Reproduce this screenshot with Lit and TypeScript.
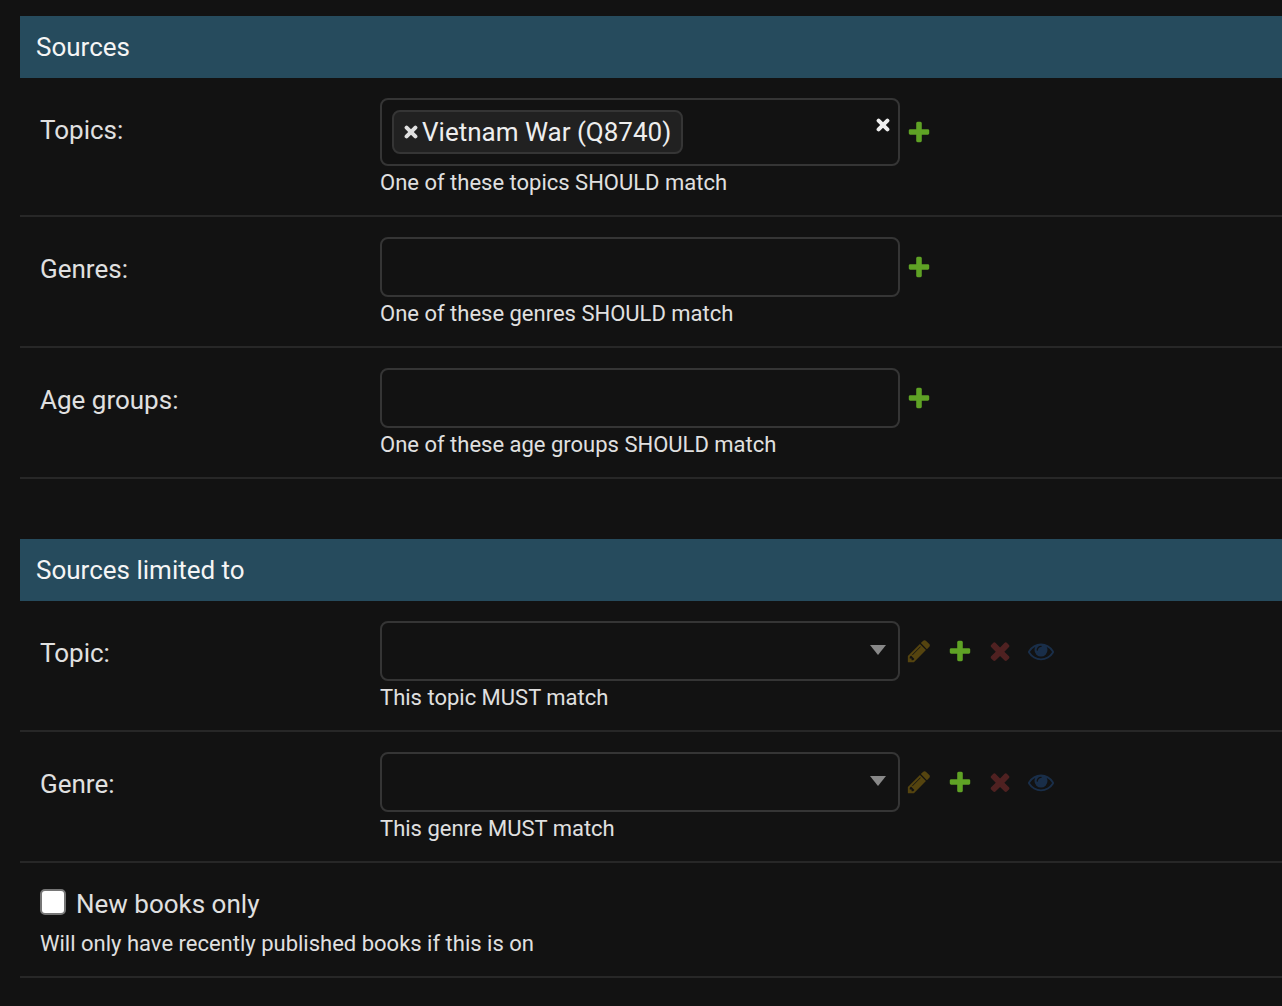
import { LitElement, html, css, svg, nothing } from "lit";
import { customElement, property, state } from "lit/decorators.js";

type IconName = "add" | "change" | "delete" | "view";

const ICONS: Record<IconName, string> = {
  add: "M1600 796v192q0 40-28 68t-68 28h-416v416q0 40-28 68t-68 28h-192q-40 0-68-28t-28-68v-416h-416q-40 0-68-28t-28-68v-192q0-40 28-68t68-28h416v-416q0-40 28-68t68-28h192q40 0 68 28t28 68v416h416q40 0 68 28t28 68z",
  change:
    "M491 1536l91-91-235-235-91 91v107h128v128h107zm523-928q0-22-22-22-10 0-17 7l-542 542q-7 7-7 17 0 22 22 22 10 0 17-7l542-542q7-7 7-17zm-54-192l416 416-832 832h-416v-416zm683 96q0 53-37 90l-166 166-416-416 166-165q36-38 90-38 53 0 91 38l235 234q37 39 37 91z",
  delete:
    "M1490 1322q0 40-28 68l-136 136q-28 28-68 28t-68-28l-294-294-294 294q-28 28-68 28t-68-28l-136-136q-28-28-28-68t28-68l294-294-294-294q-28-28-28-68t28-68l136-136q28-28 68-28t68 28l294 294 294-294q28-28 68-28t68 28l136 136q28 28 28 68t-28 68l-294 294 294 294q28 28 28 68z",
  view: "M1664 960q-152-236-381-353 61 104 61 225 0 185-131.5 316.5t-316.5 131.5-316.5-131.5-131.5-316.5q0-121 61-225-229 117-381 353 133 205 333.5 326.5t434.5 121.5 434.5-121.5 333.5-326.5zm-720-384q0-20-14-34t-34-14q-125 0-214.5 89.5t-89.5 214.5q0 20 14 34t34 14 34-14 14-34q0-86 61-147t147-61q20 0 34-14t14-34zm848 384q0 34-20 69-140 230-376.5 368.5t-499.5 138.5-499.5-139-376.5-368q-20-35-20-69t20-69q140-229 376.5-368t499.5-139 499.5 139 376.5 368q20 35 20 69z",
};

const VIEW_BOXES: Record<IconName, string> = {
  add: "0 0 1792 1792",
  change: "0 0 1792 1792",
  delete: "130 90 1652 1652",
  view: "69 0 1792 1792",
};

const cross = html`<svg class="cross" viewBox="0 0 14 14" aria-hidden="true">
  ${svg`<path d="M2.6 2.6L11.4 11.4M11.4 2.6L2.6 11.4" />`}
</svg>`;

const baseStyles = css`
  * {
    box-sizing: border-box;
  }
  button {
    display: flex;
    padding: 0;
    border: 0;
    background: none;
    color: inherit;
    font: inherit;
    cursor: pointer;
  }
`;

@customElement("related-action")
export class RelatedAction extends LitElement {
  @property() icon: IconName = "add";
  @property() name = "";
  @property({ type: Boolean }) inactive = false;

  static styles = [
    baseStyles,
    css`
      :host {
        display: block;
      }
      button:disabled {
        opacity: 0.3;
        cursor: default;
      }
      .icon {
        display: block;
        width: 26px;
        height: 26px;
        overflow: visible;
      }
      .add {
        fill: #5fa225;
      }
      .change {
        fill: #efb80b;
      }
      .delete {
        fill: #dd4646;
      }
      .view {
        fill: #2b70c8;
      }
    `,
  ];

  render() {
    return html`<button type="button" aria-label=${this.name} ?disabled=${this.inactive}>
      <svg class="icon ${this.icon}" viewBox=${VIEW_BOXES[this.icon]} aria-hidden="true">
        ${svg`<path d=${ICONS[this.icon]} />`}
      </svg>
    </button>`;
  }
}

@customElement("form-row")
export class FormRow extends LitElement {
  @property() label = "";
  @property() help = "";
  @property() kind: "multiple" | "single" = "multiple";
  @property({ attribute: false }) values: string[] = [];
  @state() private selected: string[] | null = null;

  static styles = [
    baseStyles,
    css`
      :host {
        display: grid;
        grid-template-columns: 340px minmax(0, 1fr);
        padding: 20px;
        border-bottom: 2px solid #272727;
      }
      .label {
        padding-top: 16px;
        font-size: 26px;
        line-height: 32px;
        color: #e0e0e0;
      }
      .line {
        display: flex;
        align-items: center;
        gap: 6px;
      }
      .actions {
        display: flex;
        gap: 15px;
      }
      .box {
        width: 520px;
        min-width: 0;
        min-height: 60px;
        border: 2px solid #353535;
        border-radius: 8px;
        background: #121212;
        color: #eeeeee;
        font: inherit;
        font-size: 26px;
      }
      .tags {
        display: flex;
        align-items: flex-start;
        padding: 10px;
      }
      .tag {
        display: flex;
        align-items: center;
        gap: 4px;
        height: 44px;
        padding: 0 10px;
        border: 2px solid #353535;
        border-radius: 8px;
        background: #212121;
        white-space: nowrap;
      }
      .search {
        flex: 1;
        min-width: 0;
        width: 0;
        height: 36px;
        padding: 0;
        border: 0;
        outline: 0;
        background: none;
        color: inherit;
        font: inherit;
      }
      .clear {
        padding: 8px 0;
        margin-right: -2px;
      }
      .cross {
        display: block;
        width: 14px;
        height: 14px;
        fill: none;
        stroke: #eeeeee;
        stroke-width: 4;
        stroke-linecap: round;
      }
      .tag .cross {
        stroke: #e0e0e0;
      }
      .combo {
        display: grid;
        width: 520px;
        min-width: 0;
        align-items: center;
      }
      .combo > * {
        grid-area: 1 / 1;
      }
      select.box {
        width: 100%;
        padding: 0 40px 0 16px;
        appearance: none;
      }
      .arrow {
        justify-self: end;
        width: 16px;
        height: 10px;
        margin: 0 14px 2px 0;
        fill: #888888;
        pointer-events: none;
      }
      .help {
        padding-top: 4px;
        font-size: 22px;
        line-height: 25px;
        color: #e0e0e0;
      }
    `,
  ];

  private remove(value: string) {
    this.selected = (this.selected ?? this.values).filter((v) => v !== value);
  }

  private renderMultiple() {
    const selected = this.selected ?? this.values;
    return html`<div class="box tags">
      ${selected.map(
        (value) => html`<span class="tag">
          <button type="button" aria-label="Remove ${value}" @click=${() => this.remove(value)}>
            ${cross}
          </button>
          <span>${value}</span>
        </span>`,
      )}
      <input id="field" class="search" type="text" autocomplete="off" aria-describedby="help" />
      ${selected.length
        ? html`<button
            class="clear"
            type="button"
            aria-label="Remove all items"
            @click=${() => (this.selected = [])}
          >
            ${cross}
          </button>`
        : nothing}
    </div>`;
  }

  private renderSingle() {
    return html`<div class="combo">
      <select id="field" class="box" aria-describedby="help">
        <option value=""></option>
      </select>
      <svg class="arrow" viewBox="0 0 16 10" aria-hidden="true"><path d="M0 0H16L8 10Z" /></svg>
    </div>`;
  }

  render() {
    const single = this.kind === "single";
    return html`
      <label class="label" for="field">${this.label}</label>
      <div>
        <div class="line">
          ${single ? this.renderSingle() : this.renderMultiple()}
          <div class="actions">
            ${single
              ? html`<related-action icon="change" name="Change" inactive></related-action>`
              : nothing}
            <related-action icon="add" name="Add another"></related-action>
            ${single
              ? html`<related-action icon="delete" name="Delete" inactive></related-action>
                  <related-action icon="view" name="View" inactive></related-action>`
              : nothing}
          </div>
        </div>
        <div class="help" id="help">${this.help}</div>
      </div>
    `;
  }
}

@customElement("app-root")
export class AppRoot extends LitElement {
  static styles = [
    baseStyles,
    css`
      :host {
        display: block;
        min-height: 100vh;
        padding: 16px 0 28px 20px;
        box-sizing: border-box;
        background: #121212;
        color: #e0e0e0;
        font-family: Roboto, "Liberation Sans", sans-serif;
      }
      form {
        display: flex;
        flex-direction: column;
        gap: 60px;
      }
      .heading {
        margin: 0;
        padding: 15px 16px;
        background: #264b5d;
        color: #f5f5f5;
        font-size: 26px;
        font-weight: 400;
        line-height: 32px;
      }
      .check-row {
        padding: 20px;
        border-bottom: 2px solid #272727;
      }
      .check {
        display: flex;
        align-items: center;
        gap: 10px;
        height: 42px;
      }
      .check input {
        appearance: none;
        width: 26px;
        height: 26px;
        margin: 0 0 4px;
        border: 2px solid #767676;
        border-radius: 5px;
        background: #ffffff;
      }
      .check input:checked {
        background: #2b70c8;
      }
      .check label {
        font-size: 26px;
        line-height: 32px;
      }
      .help {
        padding-top: 6px;
        font-size: 22px;
        line-height: 25px;
      }
    `,
  ];

  render() {
    return html`<form>
      <section>
        <h2 class="heading">Sources</h2>
        <form-row
          label="Topics:"
          help="One of these topics SHOULD match"
          .values=${["Vietnam War (Q8740)"]}
        ></form-row>
        <form-row label="Genres:" help="One of these genres SHOULD match"></form-row>
        <form-row label="Age groups:" help="One of these age groups SHOULD match"></form-row>
      </section>
      <section>
        <h2 class="heading">Sources limited to</h2>
        <form-row kind="single" label="Topic:" help="This topic MUST match"></form-row>
        <form-row kind="single" label="Genre:" help="This genre MUST match"></form-row>
        <div class="check-row">
          <div class="check">
            <input type="checkbox" id="new-books" aria-describedby="new-books-help" />
            <label for="new-books">New books only</label>
          </div>
          <div class="help" id="new-books-help">
            Will only have recently published books if this is on
          </div>
        </div>
      </section>
    </form>`;
  }
}
